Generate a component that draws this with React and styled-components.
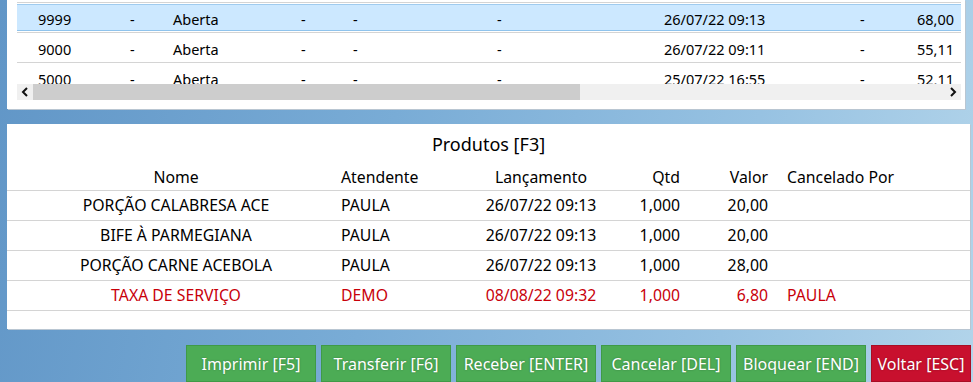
import React from "react";
import styled, { createGlobalStyle } from "styled-components";

const GlobalStyle = createGlobalStyle`
  html, body {
    margin: 0;
    padding: 0;
  }
  body {
    font-family: "Noto Sans", "Open Sans", sans-serif;
    color: #000;
  }
`;

const Screen = styled.div`
  width: 973px;
  height: 382px;
  overflow: hidden;
  display: flex;
  flex-direction: column;
  background: linear-gradient(100deg, #6196c7 0%, #79acd6 40%, #97c2e2 75%, #b2d4ea 100%);
`;

const TopPanel = styled.div`
  margin-left: 7px;
  width: 958px;
  height: 109px;
  background: #fff;
  box-shadow: 1px 1px 0 #b9c6d2;
  padding: 0 4px 0 10px;
  box-sizing: border-box;
  display: flex;
  flex-direction: column;
`;

const Viewport = styled.div`
  height: 84px;
  overflow: hidden;
`;

const Rows = styled.div`
  margin-top: 2px;
  border-top: 1px solid #d4d4d4;
`;

const TopRow = styled.div`
  display: grid;
  grid-template-columns: 93px 50px 120px 60px 60px 200px 200px 80px 80px;
  height: 30px;
  padding-top: 3px;
  align-items: center;
  font-size: 14.5px;
  box-sizing: border-box;
  border-bottom: 1px solid #d4d4d4;
  background: ${(p) => (p.$selected ? "#cce8ff" : "#fff")};
  box-shadow: ${(p) =>
    p.$selected
      ? "inset 0 1px 0 #fff, inset 0 2px 0 #9fcbef, inset 0 -1px 0 #fff, inset 0 -2px 0 #8fc3ec"
      : "none"};
`;

const TopCell = styled.div`
  padding-left: ${(p) => p.$pl || 0}px;
  padding-right: ${(p) => p.$pr || 0}px;
  text-align: ${(p) => p.$align || "left"};
  white-space: nowrap;
`;

const ScrollBar = styled.div`
  height: 16px;
  display: flex;
  align-items: stretch;
  background: #f0f0f0;
`;

const Arrow = styled.div`
  width: 16px;
  display: flex;
  align-items: center;
  justify-content: center;
`;

const Thumb = styled.div`
  width: 547px;
  background: #cdcdcd;
`;

const Track = styled.div`
  flex: 1;
`;

const BottomPanel = styled.div`
  margin: 15px 0 0 7px;
  width: 963px;
  height: 206px;
  background: #fff;
  box-shadow: 1px 1px 0 #b9c6d2;
  display: flex;
  flex-direction: column;
`;

const Title = styled.div`
  text-align: center;
  font-size: 18px;
  padding-top: 8px;
  height: 31px;
  box-sizing: border-box;
`;

const ProdGrid = styled.div`
  display: grid;
  grid-template-columns: 334px 110px 180px 59px 88px 1fr;
`;

const HeadRow = styled.div`
  display: contents;
  & > div {
    height: 36px;
    padding-top: 11px;
    box-sizing: border-box;
    border-bottom: 1px solid #d4d4d4;
  }
`;

const ProdRow = styled.div`
  display: contents;
  color: ${(p) => (p.$danger ? "#c8000a" : "#000")};
  & > div {
    height: 30px;
    padding-top: 3px;
    box-sizing: border-box;
    border-bottom: 1px solid #d4d4d4;
  }
`;

const Cell = styled.div`
  font-size: 15.8px;
  white-space: nowrap;
  text-align: ${(p) => p.$align || "left"};
  padding-left: ${(p) => p.$pl || 0}px;
  padding-right: ${(p) => p.$pr || 0}px;
`;

const ButtonBar = styled.div`
  display: flex;
  justify-content: flex-end;
  gap: 5px;
  margin: 16px 2px 0 0;
`;

const Button = styled.button`
  width: ${(p) => p.$w}px;
  height: 37px;
  border: 1px solid ${(p) => (p.$red ? "#a80e24" : "#3f9a47")};
  background: ${(p) => (p.$red ? "#c8102e" : "#4cac55")};
  color: #fff;
  font-family: "Noto Sans", "Open Sans", sans-serif;
  font-size: 16px;
  text-shadow: 0 0 2px rgba(0, 0, 0, 0.3);
  padding: 0;
  cursor: pointer;
`;

const Chevron = ({ dir }) => (
  <svg width="8" height="10" viewBox="0 0 8 10">
    <path
      d={dir === "left" ? "M6 1 L2 5 L6 9" : "M2 1 L6 5 L2 9"}
      fill="none"
      stroke="#111"
      strokeWidth="2"
    />
  </svg>
);

const pedidos = [
  { id: "9999", status: "Aberta", data: "26/07/22 09:13", valor: "68,00", selected: true },
  { id: "9000", status: "Aberta", data: "26/07/22 09:11", valor: "55,11" },
  { id: "5000", status: "Aberta", data: "25/07/22 16:55", valor: "52,11" },
];

const produtos = [
  { nome: "PORÇÃO CALABRESA ACE", atendente: "PAULA", data: "26/07/22 09:13", qtd: "1,000", valor: "20,00", cancel: "" },
  { nome: "BIFE À PARMEGIANA", atendente: "PAULA", data: "26/07/22 09:13", qtd: "1,000", valor: "20,00", cancel: "" },
  { nome: "PORÇÃO CARNE ACEBOLA", atendente: "PAULA", data: "26/07/22 09:13", qtd: "1,000", valor: "28,00", cancel: "" },
  { nome: "TAXA DE SERVIÇO", atendente: "DEMO", data: "08/08/22 09:32", qtd: "1,000", valor: "6,80", cancel: "PAULA", danger: true },
];

const botoes = [
  { label: "Imprimir [F5]", w: 130 },
  { label: "Transferir [F6]", w: 130 },
  { label: "Receber [ENTER]", w: 140 },
  { label: "Cancelar [DEL]", w: 130 },
  { label: "Bloquear [END]", w: 130 },
  { label: "Voltar [ESC]", w: 100, red: true },
];

const App = () => {
  return (
    <>
      <GlobalStyle />
      <Screen>
        <TopPanel>
          <Viewport>
            <Rows>
              {pedidos.map((p) => (
                <TopRow key={p.id} $selected={p.selected}>
                  <TopCell $pl={21}>{p.id}</TopCell>
                  <TopCell $pl={20}>-</TopCell>
                  <TopCell $pl={13}>{p.status}</TopCell>
                  <TopCell $pl={21}>-</TopCell>
                  <TopCell $pl={13}>-</TopCell>
                  <TopCell $pl={97}>-</TopCell>
                  <TopCell $pl={64}>{p.data}</TopCell>
                  <TopCell $pl={60}>-</TopCell>
                  <TopCell $align="right" $pr={6}>{p.valor}</TopCell>
                </TopRow>
              ))}
            </Rows>
          </Viewport>
          <ScrollBar>
            <Arrow>
              <Chevron dir="left" />
            </Arrow>
            <Thumb />
            <Track />
            <Arrow>
              <Chevron dir="right" />
            </Arrow>
          </ScrollBar>
        </TopPanel>

        <BottomPanel>
          <Title>Produtos [F3]</Title>
          <ProdGrid>
            <HeadRow>
              <Cell $align="center" $pl={4}>Nome</Cell>
              <Cell>Atendente</Cell>
              <Cell $align="center">Lançamento</Cell>
              <Cell $align="right" $pr={10}>Qtd</Cell>
              <Cell $align="right" $pr={10}>Valor</Cell>
              <Cell $pl={9}>Cancelado Por</Cell>
            </HeadRow>
            {produtos.map((p) => (
              <ProdRow key={p.nome} $danger={p.danger}>
                <Cell $align="center" $pl={4}>{p.nome}</Cell>
                <Cell>{p.atendente}</Cell>
                <Cell $align="center">{p.data}</Cell>
                <Cell $align="right" $pr={10}>{p.qtd}</Cell>
                <Cell $align="right" $pr={10}>{p.valor}</Cell>
                <Cell $pl={9}>{p.cancel}</Cell>
              </ProdRow>
            ))}
          </ProdGrid>
        </BottomPanel>

        <ButtonBar>
          {botoes.map((b) => (
            <Button key={b.label} $w={b.w} $red={b.red}>
              {b.label}
            </Button>
          ))}
        </ButtonBar>
      </Screen>
    </>
  );
};

export default App;
